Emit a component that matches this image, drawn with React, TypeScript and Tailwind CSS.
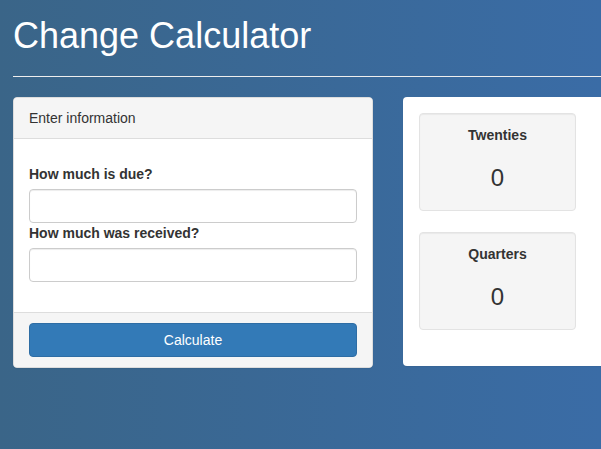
import React from 'react';

// Single coin/bill tile inside the results panel
const CoinWell = ({ label, count }: { label: string; count: number }) => (
  <div className="w-[157px] h-[98px] bg-[#f5f5f5] border border-[#e3e3e3] rounded-[4px] shadow-[inset_0_1px_1px_rgba(0,0,0,0.05)] pt-[11px] text-center text-[#333]">
    <div className="text-[14px] leading-[20px] font-bold">{label}</div>
    <div className="mt-[20px] text-[24px] leading-[26px]">{count}</div>
  </div>
);

const Field = ({ label }: { label: string }) => (
  <div>
    <label className="block text-[14px] leading-[20px] font-bold text-[#333] mb-[5px]">{label}</label>
    <input
      type="text"
      className="block w-full h-[34px] px-3 bg-white border border-[#ccc] rounded-[4px] shadow-[inset_0_1px_1px_rgba(0,0,0,0.075)] text-[14px] text-[#555] outline-none"
    />
  </div>
);

export default function App() {
  return (
    <div className="min-h-[449px] w-full overflow-hidden bg-gradient-to-r from-[#3a6588] to-[#3a6ca6] font-['Liberation_Sans',Arial,sans-serif]">
      <div className="w-[800px] pl-[13px] pt-[16px]">
        <h1 className="text-[36px] leading-[40px] text-white font-normal">Change Calculator</h1>

        <div className="mt-[20px] h-px w-full bg-[#eeeeee]" />

        <div className="mt-[20px] flex items-start gap-[30px]">
          {/* Input panel */}
          <div className="w-[360px] bg-white border border-[#ddd] rounded-[4px] shadow-[0_1px_1px_rgba(0,0,0,0.05)] overflow-hidden">
            <div className="bg-[#f5f5f5] border-b border-[#ddd] px-[15px] py-[10px] text-[14px] leading-[20px] text-[#333]">
              Enter information
            </div>
            <div className="px-[15px] pt-[25px] pb-[30px] flex flex-col">
              <Field label="How much is due?" />
              <Field label="How much was received?" />
            </div>
            <div className="bg-[#f5f5f5] border-t border-[#ddd] px-[15px] py-[10px]">
              <button className="w-full h-[34px] bg-[#337ab7] border border-[#2e6da4] rounded-[4px] text-white text-[14px] leading-[20px]">
                Calculate
              </button>
            </div>
          </div>

          {/* Results panel */}
          <div className="w-[360px] h-[269px] bg-white rounded-[4px] shadow-[0_1px_1px_rgba(0,0,0,0.05)] p-[16px] flex flex-col gap-[21px]">
            <CoinWell label="Twenties" count={0} />
            <CoinWell label="Quarters" count={0} />
          </div>
        </div>
      </div>
    </div>
  );
}
